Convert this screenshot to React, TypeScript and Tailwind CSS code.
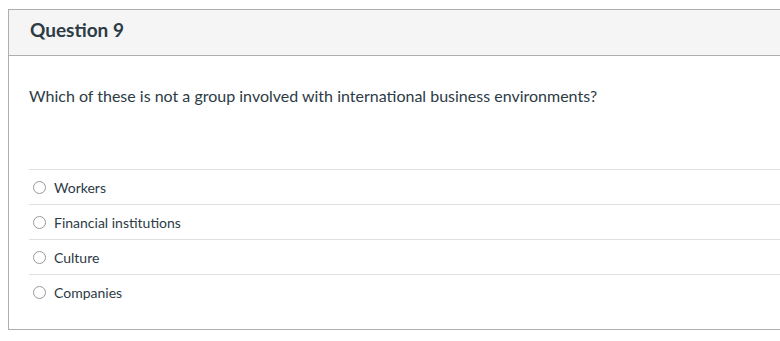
const answers = ['Workers', 'Financial institutions', 'Culture', 'Companies'];

const Radio = () => (
  <span className="inline-block h-[13px] w-[13px] shrink-0 rounded-full border border-[#9a9a9a] bg-white" />
);

const App = () => {
  return (
    <div className="h-[341px] w-[780px] overflow-hidden bg-white pl-[8px] pt-[9px] font-['Lato',sans-serif] text-[#2d3b45]">
      <div className="w-[820px] border border-[#aeaeae]">
        <div className="flex h-[46px] items-center border-b border-[#aeaeae] bg-[#f5f5f5] px-[21px] pb-[4px]">
          <h2 className="text-[19px] font-bold">Question 9</h2>
        </div>
        <div className="pl-[20px] pt-[29px] pb-[20px]">
          <p className="text-[16px] leading-[22px]">
            Which of these is not a group involved with international business environments?
          </p>
          <div className="mt-[62px]">
            {answers.map((a) => (
              <div key={a} className="flex h-[35px] items-center gap-[8px] border-t border-[#e0e0e0] pl-[4px]">
                <Radio />
                <span className="text-[14px]">{a}</span>
              </div>
            ))}
          </div>
        </div>
      </div>
    </div>
  );
};

export default App;
